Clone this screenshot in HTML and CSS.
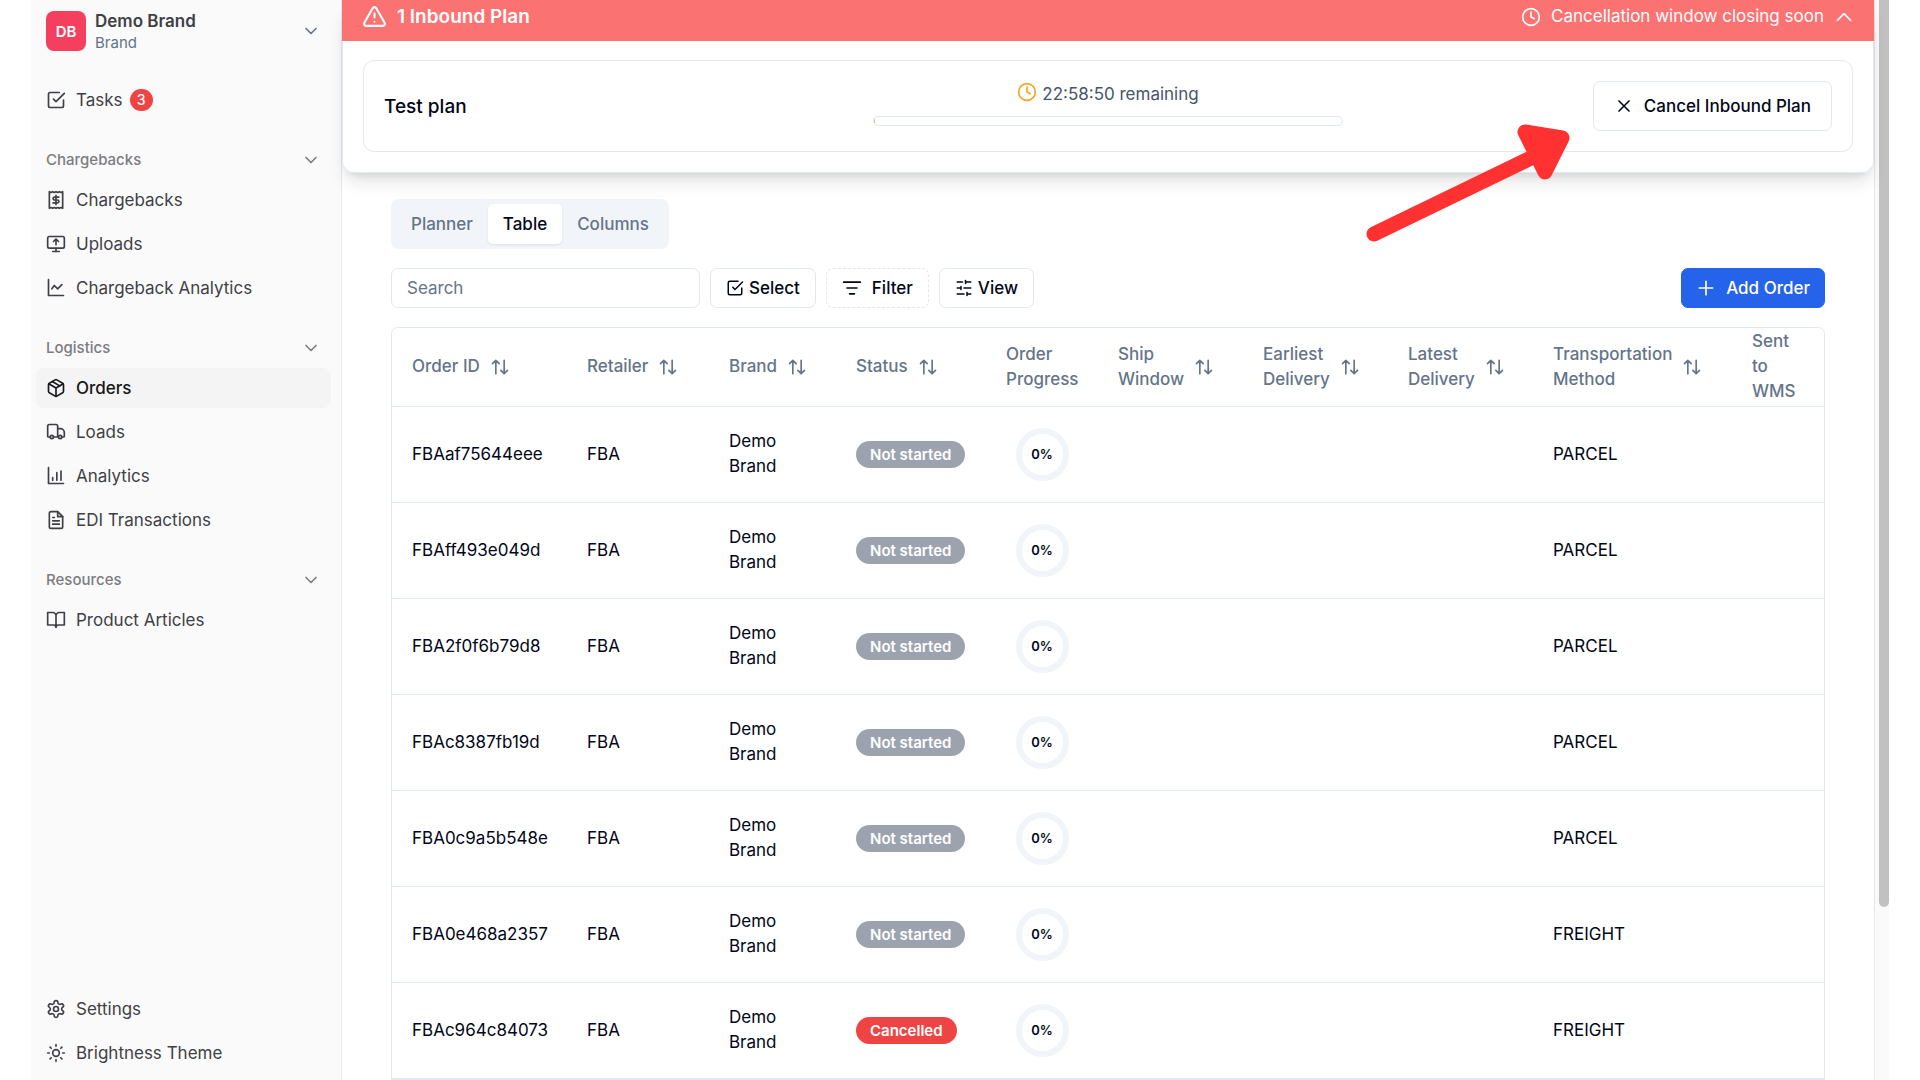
FILE: index.html
```html
<!DOCTYPE html>
<html lang="en">
<head>
	<meta charset="utf-8">
	<title>Orders</title>
	<link rel="stylesheet" href="styles.css">
</head>
<body>
	<!-- icon set -->
	<svg class="sprite" aria-hidden="true">
		<symbol id="i-down" viewBox="0 0 24 24"><path d="m6 9 6 6 6-6"/></symbol>
		<symbol id="i-up" viewBox="0 0 24 24"><path d="m4 16 8-8 8 8"/></symbol>
		<symbol id="i-check" viewBox="0 0 24 24"><path d="m9 11 3 3L22 4"/><path d="M21 12v7a2 2 0 0 1-2 2H5a2 2 0 0 1-2-2V5a2 2 0 0 1 2-2h11"/></symbol>
		<symbol id="i-receipt" viewBox="0 0 24 24"><path d="M4 2v20l2-1 2 1 2-1 2 1 2-1 2 1 2-1 2 1V2l-2 1-2-1-2 1-2-1-2 1-2-1-2 1Z"/><path d="M15.500 8.500h-5a2 1.750 0 0 0 0 3.500h3a2 1.750 0 0 1 0 3.500h-5M12 6.500v11"/></symbol>
		<symbol id="i-upload" viewBox="0 0 24 24"><rect x="2" y="3" width="20" height="14" rx="2"/><path d="m9 9 3-3 3 3M12 13V6M8 21h8M12 17v4"/></symbol>
		<symbol id="i-line" viewBox="0 0 24 24"><path d="M3 2v19h18M7 13l3-4 4 4 5-5"/></symbol>
		<symbol id="i-box" viewBox="0 0 24 24"><path d="m7.500 4.270 9 5.150"/><path d="M21 8a2 2 0 0 0-1-1.730l-7-4a2 2 0 0 0-2 0l-7 4A2 2 0 0 0 3 8v8a2 2 0 0 0 1 1.730l7 4a2 2 0 0 0 2 0l7-4A2 2 0 0 0 21 16Z"/><path d="m3.300 7 8.700 5 8.700-5M12 22V12"/></symbol>
		<symbol id="i-truck" viewBox="0 0 24 24"><path d="M14 18V5a2 2 0 0 0-2-2H4a2 2 0 0 0-2 2v12a1 1 0 0 0 1 1h2M15 18H9M19 18h2a1 1 0 0 0 1-1v-4a5 5 0 0 0-5-5h-3"/><circle cx="7" cy="18" r="2"/><circle cx="17" cy="18" r="2"/></symbol>
		<symbol id="i-bars" viewBox="0 0 24 24"><path d="M3 2v19h18M8 17v-3M13 17V8M18 17V6"/></symbol>
		<symbol id="i-doc" viewBox="0 0 24 24"><path d="M14 2H6a2 2 0 0 0-2 2v16a2 2 0 0 0 2 2h12a2 2 0 0 0 2-2V8Z"/><path d="M14 2v6h6M16 13H8M16 17H8M10 9H8"/></symbol>
		<symbol id="i-book" viewBox="0 0 24 24"><path d="M2 3h6a4 4 0 0 1 4 4v14a3 3 0 0 0-3-3H2zM22 3h-6a4 4 0 0 0-4 4v14a3 3 0 0 1 3-3h7z"/></symbol>
		<symbol id="i-gear" viewBox="0 0 24 24"><path d="M12.220 2h-.44a2 2 0 0 0-2 2v.18a2 2 0 0 1-1 1.730l-.43.25a2 2 0 0 1-2 0l-.15-.08a2 2 0 0 0-2.730.73l-.22.38a2 2 0 0 0 .73 2.730l.15.1a2 2 0 0 1 1 1.720v.51a2 2 0 0 1-1 1.740l-.15.09a2 2 0 0 0-.73 2.730l.22.38a2 2 0 0 0 2.730.73l.15-.08a2 2 0 0 1 2 0l.43.25a2 2 0 0 1 1 1.730V20a2 2 0 0 0 2 2h.44a2 2 0 0 0 2-2v-.18a2 2 0 0 1 1-1.730l.43-.25a2 2 0 0 1 2 0l.15.08a2 2 0 0 0 2.730-.73l.22-.39a2 2 0 0 0-.73-2.730l-.15-.08a2 2 0 0 1-1-1.740v-.5a2 2 0 0 1 1-1.740l.15-.09a2 2 0 0 0 .73-2.730l-.22-.38a2 2 0 0 0-2.730-.73l-.15.08a2 2 0 0 1-2 0l-.43-.25a2 2 0 0 1-1-1.730V4a2 2 0 0 0-2-2z"/><circle cx="12" cy="12" r="3"/></symbol>
		<symbol id="i-sun" viewBox="0 0 24 24"><circle cx="12" cy="12" r="4"/><path d="M12 2v2M12 20v2M4.900 4.900l1.400 1.400M17.700 17.700l1.400 1.400M2 12h2M20 12h2M6.300 17.700l-1.400 1.400M19.100 4.900l-1.400 1.400"/></symbol>
		<symbol id="i-warn" viewBox="0 0 24 24"><path d="m21.730 18-8-14a2 2 0 0 0-3.480 0l-8 14A2 2 0 0 0 4 21h16a2 2 0 0 0 1.730-3ZM12 9v4M12 17h.01"/></symbol>
		<symbol id="i-clock" viewBox="0 0 24 24"><circle cx="12" cy="12" r="10"/><path d="M12 6v6l4 2"/></symbol>
		<symbol id="i-x" viewBox="0 0 24 24"><path d="M18 6 6 18M6 6l12 12"/></symbol>
		<symbol id="i-plus" viewBox="0 0 24 24"><path d="M4 12h16M12 4v16"/></symbol>
		<symbol id="i-filter" viewBox="0 0 24 24"><path d="M2 5h20M6 12h12M9 19h6"/></symbol>
		<symbol id="i-sliders" viewBox="0 0 24 24"><path d="M21 4h-7M10 4H3M21 12h-9M8 12H3M21 20h-5M12 20H3M14 2v4M8 10v4M16 18v4"/></symbol>
		<symbol id="i-sort" viewBox="0 0 24 24"><path d="m21 16-4 4-4-4M17 20V4M3 8l4-4 4 4M7 4v16"/></symbol>
	</svg>

	<aside class="sidebar">
		<button type="button" class="brand">
			<span class="avatar">DB</span>
			<span class="brand-text"><strong>Demo Brand</strong><small>Brand</small></span>
			<svg class="chev"><use href="#i-down"/></svg>
		</button>
		<nav class="menu">
			<div class="group">
				<a href="#" class="item"><svg class="icon"><use href="#i-check"/></svg><span class="label">Tasks<span class="count">3</span></span></a>
			</div>
			<div class="group">
				<button type="button" class="group-title">Chargebacks<svg class="chev"><use href="#i-down"/></svg></button>
				<a href="#" class="item"><svg class="icon"><use href="#i-receipt"/></svg>Chargebacks</a>
				<a href="#" class="item"><svg class="icon"><use href="#i-upload"/></svg>Uploads</a>
				<a href="#" class="item"><svg class="icon"><use href="#i-line"/></svg>Chargeback Analytics</a>
			</div>
			<div class="group">
				<button type="button" class="group-title">Logistics<svg class="chev"><use href="#i-down"/></svg></button>
				<a href="#" class="item active"><svg class="icon"><use href="#i-box"/></svg>Orders</a>
				<a href="#" class="item"><svg class="icon"><use href="#i-truck"/></svg>Loads</a>
				<a href="#" class="item"><svg class="icon"><use href="#i-bars"/></svg>Analytics</a>
				<a href="#" class="item"><svg class="icon"><use href="#i-doc"/></svg>EDI Transactions</a>
			</div>
			<div class="group">
				<button type="button" class="group-title">Resources<svg class="chev"><use href="#i-down"/></svg></button>
				<a href="#" class="item"><svg class="icon"><use href="#i-book"/></svg>Product Articles</a>
			</div>
		</nav>
		<nav class="group">
			<a href="#" class="item"><svg class="icon"><use href="#i-gear"/></svg>Settings</a>
			<a href="#" class="item"><svg class="icon"><use href="#i-sun"/></svg>Brightness Theme</a>
		</nav>
	</aside>

	<main class="main">
		<section class="notice">
			<header class="notice-bar">
				<svg class="icon-lg"><use href="#i-warn"/></svg>
				<h2>1 Inbound Plan</h2>
				<button type="button" class="notice-toggle">
					<svg class="icon"><use href="#i-clock"/></svg>
					Cancellation window closing soon
					<svg class="icon"><use href="#i-up"/></svg>
				</button>
			</header>
			<div class="notice-body">
				<div class="plan">
					<h3>Test plan</h3>
					<div class="timer">
						<p><svg class="icon"><use href="#i-clock"/></svg>22:58:50 remaining</p>
						<div class="progress"><div class="progress-fill"></div></div>
					</div>
					<button type="button" class="btn cancel"><svg class="icon"><use href="#i-x"/></svg>Cancel Inbound Plan</button>
				</div>
			</div>
			<!-- arrow pointing at the cancel button -->
			<svg class="pointer" viewBox="0 0 208 124" aria-hidden="true"><path d="M10 114 171 36"/><path class="head" d="m161 12 37 6-17 34z"/></svg>
		</section>

		<div class="content">
			<div class="tabs">
				<button type="button">Planner</button>
				<button type="button" class="active">Table</button>
				<button type="button">Columns</button>
			</div>
			<div class="toolbar">
				<input type="text" class="search" placeholder="Search" aria-label="Search">
				<button type="button" class="btn"><svg class="icon-sm"><use href="#i-check"/></svg>Select</button>
				<button type="button" class="btn filter"><svg class="icon"><use href="#i-filter"/></svg>Filter</button>
				<button type="button" class="btn"><svg class="icon-sm"><use href="#i-sliders"/></svg>View</button>
				<button type="button" class="btn add"><svg class="icon"><use href="#i-plus"/></svg>Add Order</button>
			</div>
			<div class="table-wrap">
				<table>
					<colgroup>
						<col class="c-id"><col class="c-retailer"><col class="c-brand"><col class="c-status"><col class="c-progress">
						<col class="c-date"><col class="c-date"><col class="c-date"><col class="c-method"><col class="c-wms">
					</colgroup>
					<thead>
						<tr>
							<th><button type="button">Order ID<svg class="icon"><use href="#i-sort"/></svg></button></th>
							<th><button type="button">Retailer<svg class="icon"><use href="#i-sort"/></svg></button></th>
							<th><button type="button">Brand<svg class="icon"><use href="#i-sort"/></svg></button></th>
							<th><button type="button">Status<svg class="icon"><use href="#i-sort"/></svg></button></th>
							<th>Order Progress</th>
							<th><button type="button">Ship<br>Window<svg class="icon"><use href="#i-sort"/></svg></button></th>
							<th><button type="button">Earliest<br>Delivery<svg class="icon"><use href="#i-sort"/></svg></button></th>
							<th><button type="button">Latest<br>Delivery<svg class="icon"><use href="#i-sort"/></svg></button></th>
							<th><button type="button">Transportation<br>Method<svg class="icon"><use href="#i-sort"/></svg></button></th>
							<th>Sent<br>to<br>WMS</th>
						</tr>
					</thead>
					<tbody>
						<tr><td>FBAaf75644eee</td><td>FBA</td><td>Demo Brand</td><td><span class="badge">Not started</span></td><td><div class="ring">0%</div></td><td></td><td></td><td></td><td>PARCEL</td><td></td></tr>
						<tr><td>FBAff493e049d</td><td>FBA</td><td>Demo Brand</td><td><span class="badge">Not started</span></td><td><div class="ring">0%</div></td><td></td><td></td><td></td><td>PARCEL</td><td></td></tr>
						<tr><td>FBA2f0f6b79d8</td><td>FBA</td><td>Demo Brand</td><td><span class="badge">Not started</span></td><td><div class="ring">0%</div></td><td></td><td></td><td></td><td>PARCEL</td><td></td></tr>
						<tr><td>FBAc8387fb19d</td><td>FBA</td><td>Demo Brand</td><td><span class="badge">Not started</span></td><td><div class="ring">0%</div></td><td></td><td></td><td></td><td>PARCEL</td><td></td></tr>
						<tr><td>FBA0c9a5b548e</td><td>FBA</td><td>Demo Brand</td><td><span class="badge">Not started</span></td><td><div class="ring">0%</div></td><td></td><td></td><td></td><td>PARCEL</td><td></td></tr>
						<tr><td>FBA0e468a2357</td><td>FBA</td><td>Demo Brand</td><td><span class="badge">Not started</span></td><td><div class="ring">0%</div></td><td></td><td></td><td></td><td>FREIGHT</td><td></td></tr>
						<tr><td>FBAc964c84073</td><td>FBA</td><td>Demo Brand</td><td><span class="badge cancelled">Cancelled</span></td><td><div class="ring">0%</div></td><td></td><td></td><td></td><td>FREIGHT</td><td></td></tr>
					</tbody>
				</table>
			</div>
		</div>
	</main>
	<div class="scroll-track"><div class="scroll-thumb"></div></div>
</body>
</html>
```
FILE: styles.css
```css
*{
	box-sizing: border-box;
}
body{
	margin: 0;
	height: 100vh;
	padding: 0 31px;
	display: flex;
	overflow: hidden;
	background: #fff;
	color: #020617;
	font-family: Inter, "Liberation Sans", sans-serif;
	font-size: 17px;
	line-height: 25px;
}
h2, h3, p{
	margin: 0;
}
button{
	font: inherit;
	color: inherit;
	background: none;
	border: none;
	padding: 0;
	text-align: left;
}
a{
	color: inherit;
	text-decoration: none;
}
svg{
	fill: none;
	stroke: currentColor;
	stroke-width: 2;
	stroke-linecap: round;
	stroke-linejoin: round;
	flex: none;
}
.sprite{
	display: none;
}
.icon{
	width: 20px;
	height: 20px;
}
.icon-sm{
	width: 18px;
	height: 18px;
}
.icon-lg{
	width: 25px;
	height: 25px;
}
.chev{
	width: 20px;
	height: 20px;
	margin-left: auto;
}

/* sidebar */
.sidebar{
	width: 311px;
	flex: none;
	padding: 5px 10px 7px 5px;
	background: #fafafa;
	border-right: 1px solid #e2e8f0;
	color: #3f3f46;
	display: flex;
	flex-direction: column;
}
.brand{
	display: flex;
	align-items: center;
	gap: 9px;
	height: 52px;
	padding: 0 10px;
}
.brand .chev{
	color: #64748b;
}
.avatar{
	width: 40px;
	height: 40px;
	border-radius: 8px;
	background: #f43f5e;
	color: #fff;
	font-size: 15px;
	font-weight: 600;
	display: flex;
	align-items: center;
	justify-content: center;
}
.brand-text{
	display: flex;
	flex-direction: column;
}
.brand-text strong{
	font-weight: 600;
	line-height: 24px;
}
.brand-text small{
	font-size: 15px;
	line-height: 20px;
	color: #64748b;
}
.menu{
	flex: 1;
	padding-top: 23px;
	display: flex;
	flex-direction: column;
	gap: 19px;
}
.group{
	display: flex;
	flex-direction: column;
	gap: 4px;
}
.group-title{
	height: 41px;
	padding: 0 10px;
	margin-bottom: -4px;
	display: flex;
	align-items: center;
	font-size: 15px;
	font-weight: 500;
	color: #7c7c82;
}
.item{
	height: 40px;
	padding: 0 10px;
	border-radius: 8px;
	display: flex;
	align-items: center;
	gap: 10px;
}
.item.active{
	background: #f4f4f5;
	color: #18181b;
	font-weight: 500;
}
.label{
	display: flex;
	align-items: center;
	gap: 7px;
}
.count{
	width: 23px;
	height: 22px;
	border-radius: 11px;
	background: #ef4444;
	color: #fff;
	font-size: 14px;
	font-weight: 500;
	line-height: 22px;
	text-align: center;
}

/* inbound plan notice */
.main{
	flex: 1;
	min-width: 0;
	border-right: 1px solid #e5e7eb;
}
.notice{
	position: relative;
	border-radius: 0 0 12px 12px;
	box-shadow: 0 12px 18px -4px rgba(0,0,0,.12), 0 5px 8px -5px rgba(0,0,0,.12);
}
.notice-bar{
	height: 41px;
	padding: 0 20px 8px;
	background: #fb7272;
	color: #fff;
	display: flex;
	align-items: center;
	gap: 10px;
}
.notice-bar h2{
	font-size: 19px;
	font-weight: 600;
}
.notice-toggle{
	margin-left: auto;
	display: flex;
	align-items: center;
	gap: 10px;
}
.notice-body{
	padding: 19px 20px 20px;
	border: 1px solid #e2e8f0;
	border-top: none;
	border-radius: 0 0 12px 12px;
}
.plan{
	border: 1px solid #e5e7eb;
	border-radius: 11px;
	padding: 20px;
	display: grid;
	grid-template-columns: 1fr 1fr 1fr;
	align-items: center;
	gap: 20px;
}
.plan h3{
	font-size: 19px;
	font-weight: 500;
}
.timer{
	padding-bottom: 5px;
	display: flex;
	flex-direction: column;
	gap: 9px;
}
.timer p{
	display: flex;
	justify-content: center;
	gap: 5px;
	color: #475569;
}
.timer .icon{
	color: #f5a524;
}
.progress{
	height: 10px;
	border: 1px solid #e2e8f0;
	border-radius: 5px;
	overflow: hidden;
}
.progress-fill{
	width: 1px;
	height: 100%;
	background: #fbbf6a;
}
.btn{
	height: 40px;
	padding: 0 15px;
	border: 1px solid #e2e8f0;
	border-radius: 7px;
	font-weight: 500;
	display: flex;
	align-items: center;
	gap: 5px;
}
.btn.cancel{
	height: 50px;
	padding: 0 20px;
	justify-self: end;
	gap: 10px;
}
.pointer{
	position: absolute;
	top: 120px;
	right: 302px;
	width: 208px;
	height: 124px;
	stroke: #ff3131;
	stroke-width: 15;
}
.pointer .head{
	fill: #ff3131;
}

/* orders */
.content{
	padding: 26px 49px 0;
}
.tabs{
	width: fit-content;
	padding: 5px;
	border-radius: 8px;
	background: #f1f5f9;
	color: #64748b;
	display: flex;
}
.tabs button{
	height: 40px;
	padding: 0 15px;
	border-radius: 5px;
	font-weight: 500;
}
.tabs .active{
	background: #fff;
	color: #020617;
	box-shadow: 0 1px 3px rgba(0,0,0,.08);
}
.toolbar{
	margin: 19px 0;
	display: flex;
	gap: 10px;
}
.search{
	width: 309px;
	height: 40px;
	padding: 0 15px;
	border: 1px solid #e2e8f0;
	border-radius: 7px;
	font: inherit;
	color: inherit;
}
.search::placeholder{
	color: #64748b;
	opacity: 1;
}
.btn.filter{
	border-style: dashed;
	gap: 10px;
}
.btn.add{
	margin-left: auto;
	padding: 0 14px;
	border-color: #2563eb;
	background: #2563eb;
	color: #fff;
	gap: 10px;
}
.table-wrap{
	border: 1px solid #e2e8f0;
	border-radius: 7px 7px 0 0;
}
table{
	width: 100%;
	table-layout: fixed;
	border-collapse: collapse;
}
.c-id{ width: 175px; }
.c-retailer{ width: 142px; }
.c-brand{ width: 127px; }
.c-status{ width: 150px; }
.c-progress{ width: 112px; }
.c-date{ width: 145px; }
.c-method{ width: 199px; }
.c-wms{ width: 92px; }
th{
	height: 78px;
	padding: 0 20px;
	text-align: left;
	font-weight: 500;
	color: #64748b;
}
th button{
	display: flex;
	align-items: center;
	gap: 10px;
}
td{
	height: 96px;
	padding: 0 20px;
}
tr{
	border-bottom: 1px solid #e2e8f0;
}
.badge{
	display: inline-block;
	padding: 0 14px;
	border-radius: 14px;
	background: #9ca3af;
	color: #fff;
	font-size: 15px;
	font-weight: 600;
	line-height: 27px;
	white-space: nowrap;
}
.badge.cancelled{
	background: #ef4444;
}
.ring{
	width: 53px;
	height: 53px;
	margin: 0 auto;
	border: 6px solid #f1f5f9;
	border-radius: 50%;
	display: flex;
	align-items: center;
	justify-content: center;
	font-size: 13px;
	font-weight: 600;
}

/* page scrollbar */
.scroll-track{
	width: 14px;
	flex: none;
	padding-left: 4px;
	background: #fafafa;
}
.scroll-thumb{
	height: 84%;
	border-radius: 0 0 5px 5px;
	background: #c1c1c1;
}
```
